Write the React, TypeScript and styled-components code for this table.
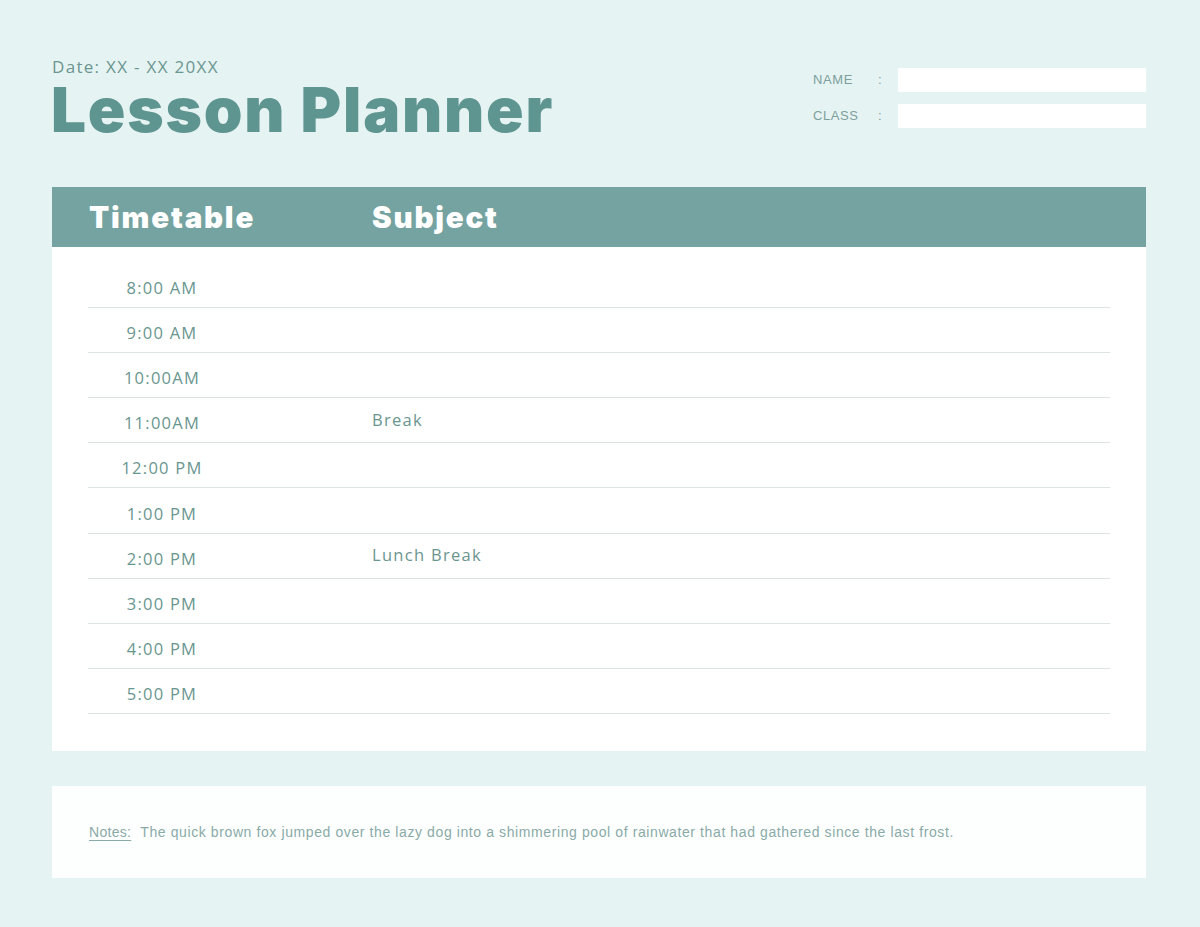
import React from "react";
import styled, { createGlobalStyle } from "styled-components";

const colors = {
  page: "#e6f3f3",
  title: "#5f9590",
  bar: "#75a3a1",
  text: "#6a9690",
  label: "#7c9f9b",
  line: "#dde3e3",
  note: "#8aaaa7",
};

const GlobalStyle = createGlobalStyle`
  html, body {
    margin: 0;
    padding: 0;
    background: ${colors.page};
  }
  body {
    font-family: "Open Sans", "Liberation Sans", sans-serif;
  }
`;

const Page = styled.div`
  width: 1200px;
  height: 927px;
  box-sizing: border-box;
  padding: 57px 54px 0 52px;
  background: ${colors.page};
`;

const Header = styled.header`
  display: flex;
  justify-content: space-between;
  align-items: flex-start;
`;

const TitleBlock = styled.div`
  display: flex;
  flex-direction: column;
`;

const DateLine = styled.div`
  font-size: 17px;
  color: ${colors.text};
  letter-spacing: 1.3px;
  line-height: 20px;
`;

const Title = styled.h1`
  margin: 6px 0 0 -1px;
  font-family: Inter, "Liberation Sans", sans-serif;
  font-weight: 900;
  font-size: 62px;
  line-height: 54px;
  letter-spacing: 1.8px;
  color: ${colors.title};
`;

const Fields = styled.div`
  display: flex;
  flex-direction: column;
  gap: 12px;
  margin-top: 11px;
`;

const FieldRow = styled.div`
  display: flex;
  align-items: center;
`;

const FieldLabel = styled.span`
  width: 65px;
  padding-left: 13px;
  font-family: "Liberation Sans", sans-serif;
  font-size: 13px;
  letter-spacing: 0.6px;
  color: ${colors.label};
  padding-bottom: 2px;
`;

const Colon = styled.span`
  width: 20px;
  font-family: "Liberation Sans", sans-serif;
  font-size: 13px;
  color: ${colors.label};
  padding-bottom: 2px;
`;

const FieldBox = styled.div`
  width: 248px;
  height: 24px;
  background: #ffffff;
`;

const Planner = styled.section`
  margin-top: 50px;
  background: #ffffff;
`;

const Bar = styled.div`
  height: 60px;
  background: ${colors.bar};
  display: flex;
  align-items: center;
  padding-left: 37px;
`;

const BarTitle = styled.h2<{ $width?: number }>`
  margin: 0;
  width: ${(p) => (p.$width ? `${p.$width}px` : "auto")};
  font-family: Inter, "Liberation Sans", sans-serif;
  font-weight: 900;
  font-size: 29.5px;
  letter-spacing: 1.8px;
  color: #ffffff;
`;

const Rows = styled.div`
  padding: 16px 36px 37px 36px;
`;

const Row = styled.div`
  height: 45.1px;
  display: flex;
  align-items: center;
  border-bottom: 1px solid ${colors.line};
  box-sizing: border-box;
`;

const Time = styled.span`
  width: 148px;
  text-align: center;
  font-size: 16.5px;
  letter-spacing: 1.25px;
  color: ${colors.text};
  padding-top: 5px;
`;

const Subject = styled.span`
  margin-left: 136px;
  font-size: 16.5px;
  letter-spacing: 1.3px;
  color: ${colors.text};
  padding-bottom: 2px;
`;

const Notes = styled.section`
  margin-top: 35px;
  height: 92px;
  background: #fdffff;
  display: flex;
  align-items: center;
  padding: 0 37px;
  font-family: "Liberation Sans", sans-serif;
  font-size: 14px;
  color: ${colors.note};
  letter-spacing: 0.6px;
`;

const NotesLabel = styled.span`
  text-decoration: underline;
  text-underline-offset: 3px;
  margin-right: 9px;
  letter-spacing: 0.3px;
`;

const schedule = [
  { time: "8:00 AM", subject: "" },
  { time: "9:00 AM", subject: "" },
  { time: "10:00AM", subject: "" },
  { time: "11:00AM", subject: "Break" },
  { time: "12:00 PM", subject: "" },
  { time: "1:00 PM", subject: "" },
  { time: "2:00 PM", subject: "Lunch Break" },
  { time: "3:00 PM", subject: "" },
  { time: "4:00 PM", subject: "" },
  { time: "5:00 PM", subject: "" },
];

export default function App() {
  return (
    <>
      <GlobalStyle />
      <Page>
        <Header>
          <TitleBlock>
            <DateLine>Date: XX - XX 20XX</DateLine>
            <Title>Lesson Planner</Title>
          </TitleBlock>
          <Fields>
            <FieldRow>
              <FieldLabel>NAME</FieldLabel>
              <Colon>:</Colon>
              <FieldBox />
            </FieldRow>
            <FieldRow>
              <FieldLabel>CLASS</FieldLabel>
              <Colon>:</Colon>
              <FieldBox />
            </FieldRow>
          </Fields>
        </Header>

        <Planner>
          <Bar>
            <BarTitle $width={283}>Timetable</BarTitle>
            <BarTitle>Subject</BarTitle>
          </Bar>
          <Rows>
            {schedule.map((s) => (
              <Row key={s.time}>
                <Time>{s.time}</Time>
                {s.subject && <Subject>{s.subject}</Subject>}
              </Row>
            ))}
          </Rows>
        </Planner>

        <Notes>
          <NotesLabel>Notes:</NotesLabel>
          The quick brown fox jumped over the lazy dog into a shimmering pool
          of rainwater that had gathered since the last frost.
        </Notes>
      </Page>
    </>
  );
}
